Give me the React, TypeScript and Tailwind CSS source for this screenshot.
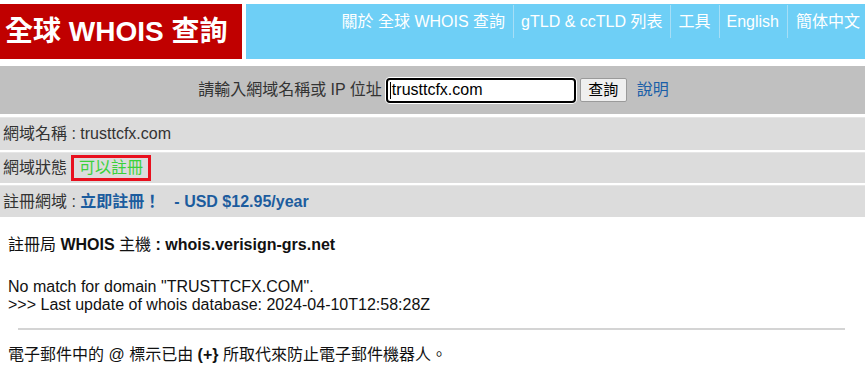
import React from "react";

const navItems = ["關於 全球 WHOIS 查詢", "gTLD & ccTLD 列表", "工具", "English", "簡体中文"];

export default function App() {
  return (
    <div className="w-[865px] h-[379px] overflow-hidden bg-white text-[16px] text-[#333] font-['Liberation_Sans','Noto_Sans_CJK_TC',sans-serif]">
      {/* Header */}
      <div className="flex gap-[4px] pt-[4px]">
        <div className="w-[242px] h-[55px] bg-[#c00000] flex items-center pl-[5px] text-[28px] font-bold text-white leading-none">
          全球 WHOIS 查詢
        </div>
        <div className="flex-1 h-[55px] bg-[#6ecff6] flex justify-end items-start pr-[5px] pt-[1px]">
          {navItems.map((t, i) => {
            const first = i === 0;
            const last = i === navItems.length - 1;
            return (
              <div
                key={t}
                className={
                  "h-[33px] flex items-center text-white whitespace-nowrap " +
                  (first ? "pr-[8px]" : last ? "border-l border-[#a6def6] pl-[8px]" : "border-l border-[#a6def6] pl-[7px] pr-[8px]")
                }
              >
                {t}
              </div>
            );
          })}
        </div>
      </div>

      {/* Search bar */}
      <div className="mt-[7px] h-[48px] bg-[#c0c0c0] flex items-center justify-center gap-[4px] pl-[2px]">
        <span className="text-[#333]">請輸入網域名稱或 IP 位址</span>
        <div className="w-[190px] h-[25px] border-2 border-black rounded-[4px] bg-white ring-1 ring-white flex items-center pl-[2px] text-black">
          <span className="w-px h-[17px] bg-black mr-[1px]" />
          trusttcfx.com
        </div>
        <div className="w-[47px] h-[24px] bg-[#efefef] border border-[#9a9a9a] rounded-[2px] flex items-center justify-center text-[15px] text-black">
          查詢
        </div>
        <span className="ml-[6px] text-[#1a5fa8]">說明</span>
      </div>

      {/* Result rows */}
      <div className="mt-[3px] flex flex-col gap-[2px]">
        <div className="h-[33px] bg-[#dcdcdc] border-t border-[#e6e6e6] flex items-center pl-[3px]">
          網域名稱 : trusttcfx.com
        </div>
        <div className="h-[31px] bg-[#dcdcdc] border-t border-[#e6e6e6] flex items-center pl-[3px]">
          網域狀態
          <span className="ml-[4px] h-[26px] px-[5px] border-[3px] border-[#e8101e] flex items-center text-[#3ad13a]">
            可以註冊
          </span>
        </div>
        <div className="h-[32px] bg-[#dcdcdc] border-t border-[#e6e6e6] flex items-center pl-[3px]">
          註冊網域 :&nbsp;
          <span className="text-[#1c5c9e] font-bold">
            立即註冊！<span className="ml-[14px]">- USD $12.95/year</span>
          </span>
        </div>
      </div>

      {/* WHOIS output */}
      <div className="pl-[8px] pt-[19px] text-[#111]">
        <div className="leading-[18px]">
          註冊局 <b>WHOIS</b> 主機 <b>: whois.verisign-grs.net</b>
        </div>
        <div className="mt-[24px] leading-[18px]">No match for domain "TRUSTTCFX.COM".</div>
        <div className="leading-[18px]">&gt;&gt;&gt; Last update of whois database: 2024-04-10T12:58:28Z</div>
      </div>
      <div className="ml-[18px] mr-[20px] mt-[14px] h-[2px] bg-[#d4d4d4]" />
      <div className="pl-[8px] mt-[16px] leading-[18px] text-[#111]">
        電子郵件中的 @ 標示已由 <b>{"(+}"}</b> 所取代來防止電子郵件機器人。
      </div>
    </div>
  );
}
